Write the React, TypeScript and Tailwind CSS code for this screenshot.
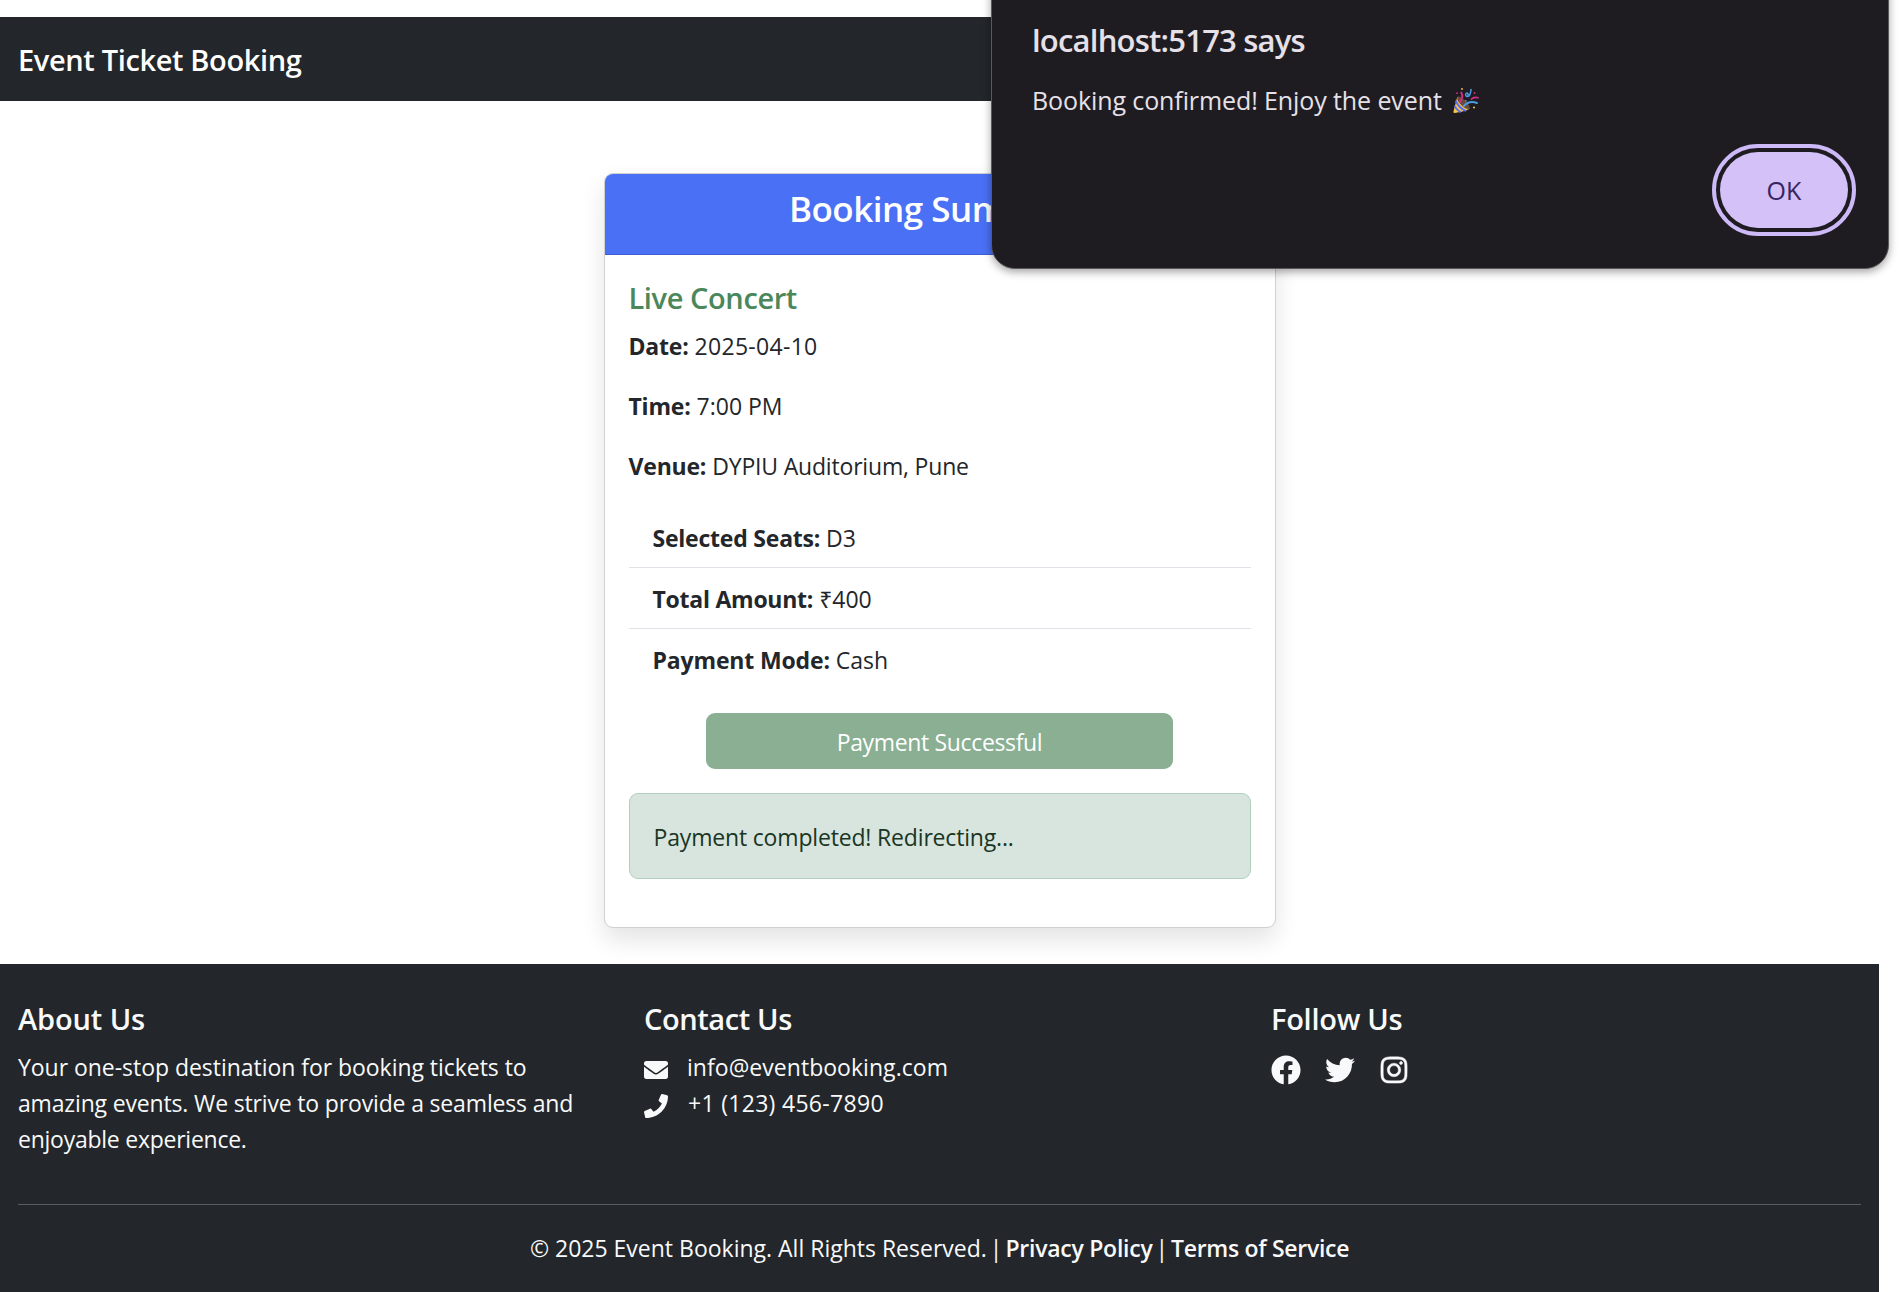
import type { ReactNode } from "react";
import { FaEnvelope, FaFacebook, FaInstagram, FaPhone, FaTwitter } from "react-icons/fa";

function PartyPopper() {
  return (
    <svg viewBox="0 0 26 26" className="h-[26px] w-[26px]" fill="none" strokeLinecap="round">
      <path d="M4.2 9 C7.5 8.5 16 16.500 16.500 20.500 C15 22.500 6 24.500 1.300 25 C0.500 24.800 0.300 24.300 0.500 23.500 Z" fill="#F5C84C" />
      <path d="M4.600 8.700 C7.500 7.500 16.800 16 16.700 20 C15.800 22.300 12 21 8.500 17.300 C5 13.800 3.300 10.500 4.600 8.700 Z" fill="#6B4A3C" />
      <path d="M3 13.500 C5 17.500 8.500 21 12.300 22.700" stroke="#5B6CF0" strokeWidth="2" />
      <path d="M1.900 18.500 C3.200 20.800 4.800 22.600 7.200 23.900" stroke="#5B6CF0" strokeWidth="1.800" />
      <path d="M8.200 4.500 C10 7.500 9.500 11 6.800 14" stroke="#D62D86" strokeWidth="1.900" />
      <path d="M18.300 11.300 C20 9.300 22.500 9 25.200 9.800" stroke="#D62D86" strokeWidth="1.500" />
      <path d="M10.800 18 C14.500 13.800 19 13.200 24 15" stroke="#4C9BE0" strokeWidth="2" />
      <path d="M18 1.400 C17.800 4.500 17 7.500 15 8.500 C13 9 11.800 6.500 13.200 5.300 C14.500 4.500 15.700 6 15 8.500" stroke="#4C9BE0" strokeWidth="1.500" />
      <circle cx="9" cy="1" r="0.900" fill="#F5C84C" />
      <circle cx="21" cy="19.600" r="1" fill="#F5C84C" />
      <circle cx="4" cy="5.200" r="0.900" fill="#D62D86" />
      <circle cx="21.600" cy="5" r="0.900" fill="#D62D86" />
      <circle cx="12.800" cy="12.800" r="0.900" fill="#4C9BE0" />
    </svg>
  );
}

function Detail({ label, children }: { label: string; children: ReactNode }) {
  return (
    <p className="mb-6">
      <strong className="font-bold tracking-[-0.2px]">{label}</strong> {children}
    </p>
  );
}

function Dialog() {
  return (
    <div className="absolute top-[-30px] left-[991px] h-[299px] w-[898px] rounded-[24px] border border-[#5a585d] bg-[#1f1c21] pt-[29px] pr-8 pl-10 text-[#e6e1e9] shadow-[0_3px_9px_rgba(0,0,0,0.36)]">
      <h2 className="pt-[19px] text-[31px] leading-[42px] font-semibold tracking-[-0.78px]">localhost:5173 says</h2>
      <div className="mt-[21px] flex items-center text-[25px] leading-9">
        <p className="tracking-[-0.1px]">Booking confirmed! Enjoy the event</p>
        <span className="ml-[11px] pt-px">
          <PartyPopper />
        </span>
      </div>
      <div className="mt-[26px] flex justify-end">
        <button className="h-[92px] w-[144px] rounded-full border-4 border-[#cdb9f8] p-1">
          <span className="flex h-full items-center justify-center rounded-full bg-[#d3c1f7] text-[25px] font-medium text-[#372560]">
            OK
          </span>
        </button>
      </div>
    </div>
  );
}

function BookingCard() {
  return (
    <section className="mx-auto mt-[72px] h-[755px] w-[672px] rounded-[9px] border border-[#d0d0d1] bg-white shadow-[0_12px_24px_rgba(0,0,0,0.11)]">
      <h1 className="h-[81px] rounded-t-[8px] border-b border-[#3f5ed0] bg-[#4a70f5] pt-[13px] text-center text-[35px] leading-[43px] font-semibold tracking-[-0.5px] text-white">
        Booking Summary
      </h1>
      <div className="px-6 pt-[25px]">
        <h2 className="mb-3 text-[29px] leading-9 font-semibold tracking-[-0.4px] text-[#4b875a]">Live Concert</h2>
        <Detail label="Date:">
          <span className="tracking-[0.3px]">2025-04-10</span>
        </Detail>
        <Detail label="Time:">7:00 PM</Detail>
        <Detail label="Venue:">
          <span className="tracking-[-0.18px]">DYPIU Auditorium, Pune</span>
        </Detail>
        <ul className="-mt-px">
          <li className="h-[61px] border-b border-[#dfe2e6] px-6 pt-[13px]">
            <strong className="font-bold tracking-[-0.22px]">Selected Seats:</strong> D3
          </li>
          <li className="h-[61px] border-b border-[#dfe2e6] px-6 pt-[13px]">
            <strong className="font-bold tracking-[-0.25px]">Total Amount:</strong> ₹400
          </li>
          <li className="h-[60px] px-6 pt-[13px]">
            <strong className="font-bold tracking-[-0.15px]">Payment Mode:</strong> Cash
          </li>
        </ul>
        <button className="mx-auto mt-6 block h-14 w-[467px] rounded-[9px] bg-[#8aaf93] pt-0.5 tracking-[-0.35px] text-white">
          Payment Successful
        </button>
        <div className="mt-6 h-[86px] rounded-[9px] border border-[#b0cfbf] bg-[#d7e5de] px-6 pt-[25px] tracking-[-0.17px] text-[#1b3524]">
          Payment completed! Redirecting...
        </div>
      </div>
    </section>
  );
}

function Footer() {
  return (
    <footer className="mt-9 h-[328px] bg-[#23262a] px-[18px] pt-[37px] text-[#f8f9fa]">
      <div className="grid grid-cols-[626px_627px_1fr]">
        <div>
          <h3 className="mb-3 text-[29px] leading-9 font-semibold tracking-[-0.12px]">About Us</h3>
          <p>
            <span className="tracking-[-0.04px]">Your one-stop destination for booking tickets to</span>
            <br />
            <span className="tracking-[-0.16px]">amazing events. We strive to provide a seamless and</span>
            <br />
            <span className="tracking-[-0.25px]">enjoyable experience.</span>
          </p>
        </div>
        <div>
          <h3 className="mb-3 text-[29px] leading-9 font-semibold tracking-[-0.4px]">Contact Us</h3>
          <p className="flex items-center tracking-[0.04px]">
            <FaEnvelope className="mt-1.5 mr-[19px] size-6" />
            info@eventbooking.com
          </p>
          <p className="flex items-center tracking-[0.3px]">
            <FaPhone className="mt-1.5 mr-5 size-6" />
            +1 (123) 456-7890
          </p>
        </div>
        <div>
          <h3 className="mb-3 text-[29px] leading-9 font-semibold tracking-[-0.27px]">Follow Us</h3>
          <div className="flex items-center gap-6 pt-[6px]">
            <FaFacebook className="size-[30px]" />
            <FaTwitter className="size-[30px]" />
            <FaInstagram className="size-[30px]" stroke="currentColor" strokeWidth="8" />
          </div>
        </div>
      </div>
      <hr className="mt-[47px] border-[#595d5f]" />
      <p className="mt-[25px] text-center">
        © 2025 Event Booking. All Rights Reserved. <span className="-mx-[3px]">|</span>{" "}
        <strong className="font-semibold tracking-[-0.25px]">Privacy Policy</strong>{" "}
        <span className="-mx-[3px]">|</span>{" "}
        <strong className="font-semibold tracking-[-0.3px]">Terms of Service</strong>
      </p>
    </footer>
  );
}

export default function App() {
  return (
    <div className="relative h-screen overflow-hidden bg-white font-['Open_Sans','Noto_Sans',sans-serif] text-[23px] leading-9 text-[#23262a]">
      <div className="w-[1879px] pt-[17px]">
        <header className="flex h-[84px] items-center bg-[#23262a] px-[18px] pt-[2px] text-[29px] font-semibold tracking-[-0.36px] text-white">
          Event Ticket Booking
        </header>
        <BookingCard />
        <Footer />
      </div>
      <Dialog />
    </div>
  );
}
